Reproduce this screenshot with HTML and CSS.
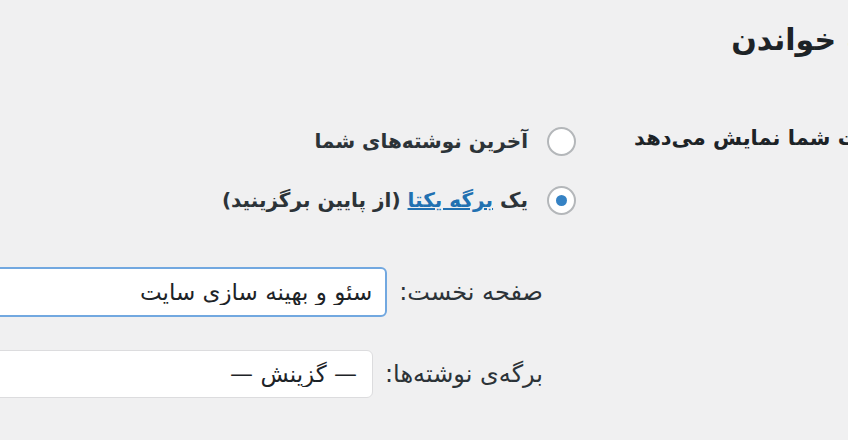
FILE: index.html
```html
<!DOCTYPE html>
<html lang="fa" dir="rtl">
<head>
  <meta charset="UTF-8">
  <meta name="viewport" content="width=device-width, initial-scale=1.0">
  <title>تنظیمات خواندن</title>
  <link rel="stylesheet" href="styles.css">
</head>
<body>
  <div class="wrap">
    <h1>تنظیمات خواندن</h1>

    <div class="form-row">
      <div class="row-title">برگه نخست شما نمایش می‌دهد</div>
      <div class="row-field">
        <label class="radio-line">
          <input type="radio" name="show_on_front" value="posts">
          <span>آخرین نوشته‌های شما</span>
        </label>
        <label class="radio-line">
          <input type="radio" name="show_on_front" value="page" checked>
          <span>یک <a href="#">برگه یکتا</a> (از پایین برگزینید)</span>
        </label>

        <ul class="page-selects">
          <li>
            <label for="page_on_front">صفحه نخست:</label>
            <select id="page_on_front" class="is-focused">
              <option>سئو و بهینه سازی سایت</option>
            </select>
          </li>
          <li>
            <label for="page_for_posts">برگه‌ی نوشته‌ها:</label>
            <select id="page_for_posts">
              <option>&mdash; گزینش &mdash;</option>
            </select>
          </li>
        </ul>
      </div>
    </div>
  </div>
</body>
</html>
```

FILE: styles.css
```css
* {
  margin: 0;
  padding: 0;
  box-sizing: border-box;
}

html,
body {
  overflow: hidden;
}

body {
  font-family: 'DejaVu Sans', sans-serif;
  background: #f0f0f1;
  color: #1d2327;
  direction: rtl;
  width: 848px;
  height: 440px;
}

.wrap {
  margin-right: -125px;
}

h1 {
  font-size: 30px;
  font-weight: bold;
  line-height: 40px;
  padding-top: 20px;
  color: #1d2327;
}

.form-row {
  display: flex;
  margin-top: 62px;
}

.row-title {
  width: 383px;
  flex-shrink: 0;
  padding-left: 44px;
  text-align: left;
  font-size: 21px;
  font-weight: bold;
  line-height: 32px;
  white-space: nowrap;
}

.row-field {
  flex: 1;
  padding-top: 3px;
  padding-right: 14px;
}

.radio-line {
  display: flex;
  align-items: center;
  gap: 19px;
  height: 32px;
  margin-bottom: 27px;
  font-size: 20px;
  font-weight: bold;
  color: #2c3338;
  white-space: nowrap;
}

.radio-line input {
  appearance: none;
  width: 29px;
  height: 29px;
  border: 2px solid #b4b7ba;
  border-radius: 50%;
  background: #fff;
  display: flex;
  align-items: center;
  justify-content: center;
  flex-shrink: 0;
}

.radio-line input:checked::before {
  content: '';
  width: 11px;
  height: 11px;
  border-radius: 50%;
  background: #3582c4;
}

.radio-line a {
  color: #2271b1;
  text-decoration: underline;
}

.page-selects {
  list-style: none;
  padding-right: 33px;
  margin-top: 51px;
}

.page-selects li {
  display: flex;
  align-items: center;
  gap: 12px;
  margin-bottom: 33px;
  white-space: nowrap;
}

.page-selects label {
  font-size: 24px;
  color: #2c3338;
}

.page-selects select {
  appearance: none;
  font-family: inherit;
  font-size: 23px;
  color: #1d2327;
  background: #fff;
  width: 440px;
  height: 48px;
  padding: 0 15px;
  border: 1px solid #dcdcde;
  border-radius: 6px;
  outline: none;
}

.page-selects select.is-focused {
  height: 50px;
  padding: 0 13px;
  border: 2px solid #72a8e0;
}
```
